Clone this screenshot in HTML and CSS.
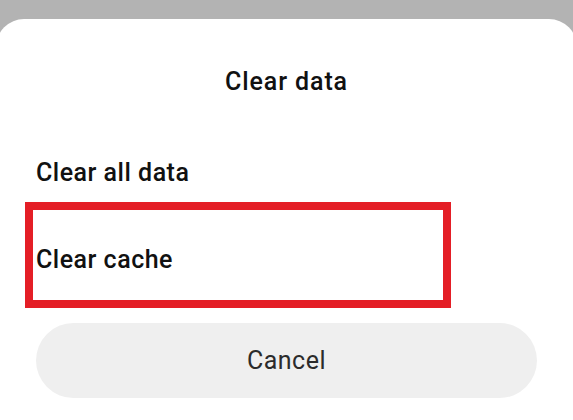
FILE: index.html
```html
<!DOCTYPE html>
<html lang="en">
<head>
    <meta charset="UTF-8">
    <meta name="viewport" content="width=device-width, initial-scale=1.0">
    <title>Clear data</title>
    <link rel="stylesheet" href="styles.css">
</head>
<body>
    <div class="sheet">
        <h1 class="sheet-title">Clear data</h1>
        <ul class="options">
            <li class="option">Clear all data</li>
            <li class="option">
                Clear cache
                <span class="highlight"></span>
            </li>
        </ul>
        <button class="cancel">Cancel</button>
    </div>
</body>
</html>
```

FILE: styles.css
```css
body {
    margin: 0;
    background-color: #b3b3b3;
    font-family: Roboto, "Liberation Sans", sans-serif;
    color: #111;
    overflow: hidden;
}
.sheet {
    margin: 19px -4px 0;
    height: 401px;
    padding: 0 40px;
    background-color: #fff;
    border-radius: 28px 28px 0 0;
    box-sizing: border-box;
}
.sheet-title {
    margin: 0;
    padding-top: 48px;
    text-align: center;
    font-size: 25px;
    font-weight: 500;
    letter-spacing: 0.9px;
    line-height: 30px;
}
.options {
    list-style: none;
    margin: 32px 0 0;
    padding: 0;
}
.option {
    position: relative;
    display: flex;
    align-items: center;
    height: 87px;
    font-size: 25px;
    font-weight: 500;
    letter-spacing: 0.5px;
    line-height: 30px;
}
.highlight {
    position: absolute;
    left: -11px;
    top: -14px;
    width: 426px;
    height: 106px;
    border: 8px solid #e41e26;
    box-sizing: border-box;
}
.cancel {
    display: block;
    width: 100%;
    height: 75px;
    margin-top: 20px;
    border: none;
    border-radius: 38px;
    background-color: #efefef;
    color: #2b2b2b;
    font-family: inherit;
    font-size: 25px;
    letter-spacing: 0.5px;
}
```
